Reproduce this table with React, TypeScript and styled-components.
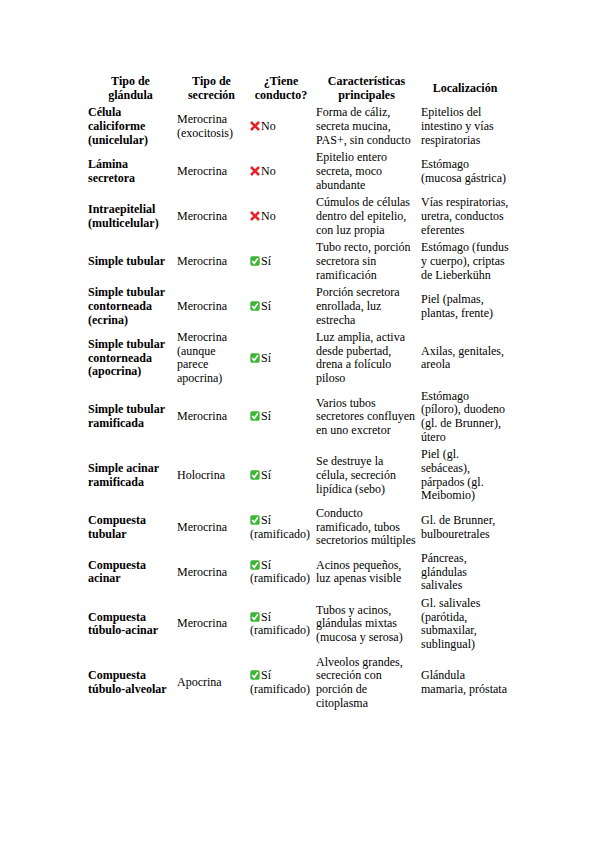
import React from 'react';
import styled, { createGlobalStyle } from 'styled-components';

const GlobalStyle = createGlobalStyle`
  body {
    margin: 0;
    background: #ffffff;
  }
`;

const Page = styled.div`
  padding-top: 72px;
  padding-right: 2px;
`;

const Table = styled.table`
  margin: 0 auto;
  border-spacing: 2px;
  font-family: 'Liberation Serif', 'Times New Roman', serif;
  font-size: 12px;
  line-height: 13.65px;
  color: #000;
`;

const HeadCell = styled.th<{ $w: number }>`
  width: ${(p) => p.$w}px;
  padding: 1px;
  font-weight: bold;
  text-align: center;
  vertical-align: middle;
`;

const Cell = styled.td<{ $bold?: boolean }>`
  padding: 1px;
  vertical-align: middle;
  text-align: left;
  font-weight: ${(p) => (p.$bold ? 'bold' : 'normal')};
`;

const Mark = styled.svg`
  width: 10px;
  height: 10px;
  vertical-align: -1px;
  margin-right: 1px;
`;

const CrossIcon = () => (
  <Mark viewBox="0 0 10 10">
    <path d="M1 1 L9 9 M9 1 L1 9" stroke="#e5232b" strokeWidth="2.6" />
  </Mark>
);

const CheckIcon = () => (
  <Mark viewBox="0 0 10 10">
    <rect x="0.3" y="0.3" width="9.4" height="9.4" rx="1.6" fill="#3db636" />
    <path d="M2.2 5 L4.2 7.4 L7.9 2.2" stroke="#fff" strokeWidth="1.7" fill="none" />
  </Mark>
);

interface Gland {
  tipo: string;
  secrecion: string;
  conducto: 'no' | 'si' | 'ram';
  caracteristicas: string;
  localizacion: string;
}

const columns: { label: string; w: number }[] = [
  { label: 'Tipo de glándula', w: 85 },
  { label: 'Tipo de secreción', w: 69 },
  { label: '¿Tiene conducto?', w: 62 },
  { label: 'Características principales', w: 101 },
  { label: 'Localización', w: 88 },
];

const glands: Gland[] = [
  {
    tipo: 'Célula caliciforme (unicelular)',
    secrecion: 'Merocrina (exocitosis)',
    conducto: 'no',
    caracteristicas: 'Forma de cáliz, secreta mucina, PAS+, sin conducto',
    localizacion: 'Epitelios del intestino y vías respiratorias',
  },
  {
    tipo: 'Lámina secretora',
    secrecion: 'Merocrina',
    conducto: 'no',
    caracteristicas: 'Epitelio entero secreta, moco abundante',
    localizacion: 'Estómago (mucosa gástrica)',
  },
  {
    tipo: 'Intraepitelial (multicelular)',
    secrecion: 'Merocrina',
    conducto: 'no',
    caracteristicas: 'Cúmulos de células dentro del epitelio, con luz propia',
    localizacion: 'Vías respiratorias, uretra, conductos eferentes',
  },
  {
    tipo: 'Simple tubular',
    secrecion: 'Merocrina',
    conducto: 'si',
    caracteristicas: 'Tubo recto, porción secretora sin ramificación',
    localizacion: 'Estómago (fundus y cuerpo), criptas de Lieberkühn',
  },
  {
    tipo: 'Simple tubular contorneada (ecrina)',
    secrecion: 'Merocrina',
    conducto: 'si',
    caracteristicas: 'Porción secretora enrollada, luz estrecha',
    localizacion: 'Piel (palmas, plantas, frente)',
  },
  {
    tipo: 'Simple tubular contorneada (apocrina)',
    secrecion: 'Merocrina (aunque parece apocrina)',
    conducto: 'si',
    caracteristicas: 'Luz amplia, activa desde pubertad, drena a folículo piloso',
    localizacion: 'Axilas, genitales, areola',
  },
  {
    tipo: 'Simple tubular ramificada',
    secrecion: 'Merocrina',
    conducto: 'si',
    caracteristicas: 'Varios tubos secretores confluyen en uno excretor',
    localizacion: 'Estómago (píloro), duodeno (gl. de Brunner), útero',
  },
  {
    tipo: 'Simple acinar ramificada',
    secrecion: 'Holocrina',
    conducto: 'si',
    caracteristicas: 'Se destruye la célula, secreción lipídica (sebo)',
    localizacion: 'Piel (gl. sebáceas), párpados (gl. Meibomio)',
  },
  {
    tipo: 'Compuesta tubular',
    secrecion: 'Merocrina',
    conducto: 'ram',
    caracteristicas: 'Conducto ramificado, tubos secretorios múltiples',
    localizacion: 'Gl. de Brunner, bulbouretrales',
  },
  {
    tipo: 'Compuesta acinar',
    secrecion: 'Merocrina',
    conducto: 'ram',
    caracteristicas: 'Acinos pequeños, luz apenas visible',
    localizacion: 'Páncreas, glándulas salivales',
  },
  {
    tipo: 'Compuesta túbulo-acinar',
    secrecion: 'Merocrina',
    conducto: 'ram',
    caracteristicas: 'Tubos y acinos, glándulas mixtas (mucosa y serosa)',
    localizacion: 'Gl. salivales (parótida, submaxilar, sublingual)',
  },
  {
    tipo: 'Compuesta túbulo-alveolar',
    secrecion: 'Apocrina',
    conducto: 'ram',
    caracteristicas: 'Alveolos grandes, secreción con porción de citoplasma',
    localizacion: 'Glándula mamaria, próstata',
  },
];

const Conducto: React.FC<{ value: Gland['conducto'] }> = ({ value }) => {
  if (value === 'no') {
    return (
      <>
        <CrossIcon />
        No
      </>
    );
  }
  return (
    <>
      <CheckIcon />
      Sí{value === 'ram' ? ' (ramificado)' : ''}
    </>
  );
};

const App: React.FC = () => {
  return (
    <Page>
      <GlobalStyle />
      <Table>
        <thead>
          <tr>
            {columns.map((c) => (
              <HeadCell key={c.label} $w={c.w}>
                {c.label}
              </HeadCell>
            ))}
          </tr>
        </thead>
        <tbody>
          {glands.map((g) => (
            <tr key={g.tipo}>
              <Cell $bold>{g.tipo}</Cell>
              <Cell>{g.secrecion}</Cell>
              <Cell>
                <Conducto value={g.conducto} />
              </Cell>
              <Cell>{g.caracteristicas}</Cell>
              <Cell>{g.localizacion}</Cell>
            </tr>
          ))}
        </tbody>
      </Table>
    </Page>
  );
};

export default App;
